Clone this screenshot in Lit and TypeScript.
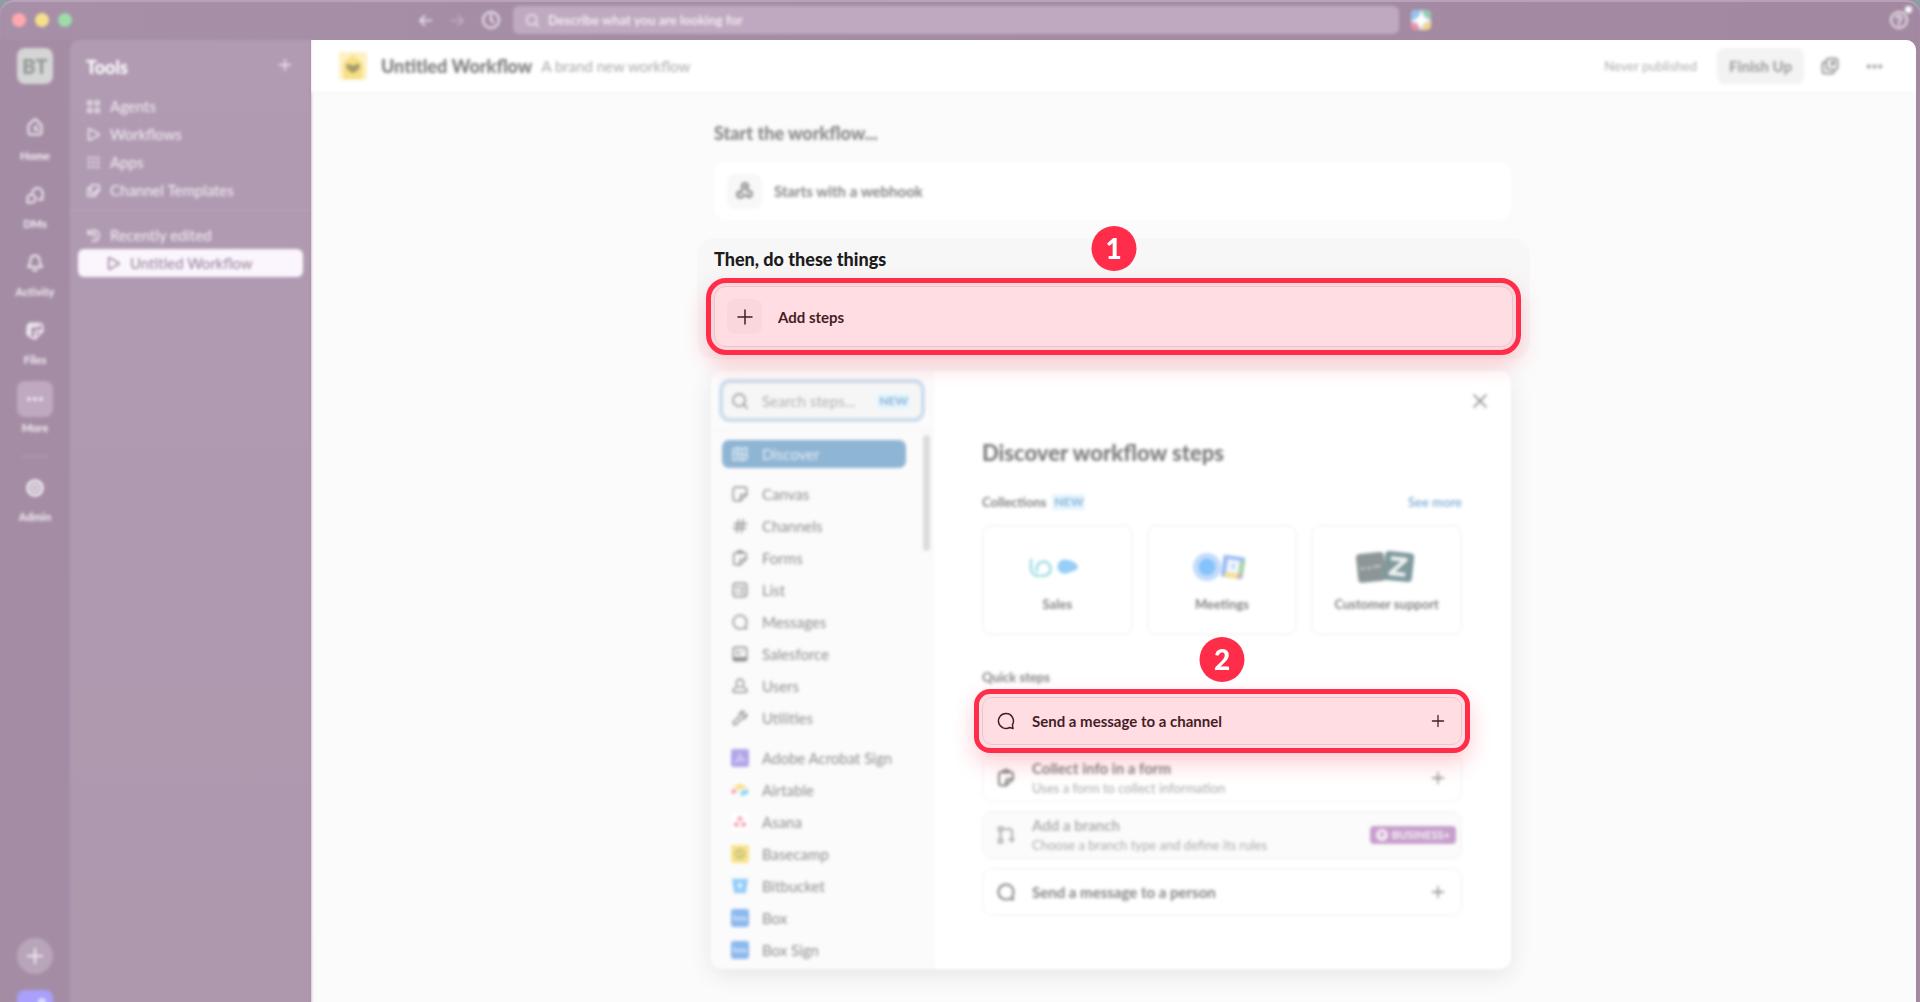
import { LitElement, html, svg, css, nothing } from "lit";
import { customElement, property } from "lit/decorators.js";

/* Line icons on a 20 x 20 grid, stroked with the current colour. */
const ICONS: Record<string, unknown> = {
  back: svg`<path d="M17 10H4M9 4.5 3.5 10 9 15.5"/>`,
  forward: svg`<path d="M3 10h13M11 4.5 16.5 10 11 15.5"/>`,
  clock: svg`<circle cx="10" cy="10" r="8"/><path d="M10 5v5l2.6 2.4"/>`,
  search: svg`<circle cx="9" cy="9" r="6.8"/><path d="m14 14 4 4"/>`,
  help: svg`<circle cx="10" cy="10" r="8"/><path d="M7.6 8a2.4 2.4 0 1 1 3.4 2.3c-.7.3-1 .7-1 1.5"/><circle cx="10" cy="14" r=".5"/>`,
  home: svg`<path d="M3.5 8.2 8.6 3a2 2 0 0 1 2.8 0l5.1 5.2V15a2.5 2.5 0 0 1-2.5 2.5H6A2.5 2.5 0 0 1 3.5 15z"/><path d="M13 13h-1.500a1.500 1.500 0 0 1 0-3.500H12"/>`,
  dms: svg`<path d="M7.2 7.5A5.400 5.400 0 1 1 17.300 11l.2 3.500h-4"/><path d="M2.500 17.500v-4a4 4 0 1 1 4 4z"/>`,
  bell: svg`<path d="M10 2.500c-3 0-4.300 2.200-4.600 4.500L4.800 11 3 14h14l-1.800-3-.6-4C14.300 4.700 13 2.500 10 2.500z"/><path d="M8 17.200h4"/>`,
  files: svg`<path d="M17.500 10V6A3.500 3.500 0 0 0 14 2.500H6A3.500 3.500 0 0 0 2.500 6v8"/><path d="M2.500 10a7.500 7.500 0 0 0 7.500 7.500l7.500-7.500"/><path d="M10 17.500V12a2 2 0 0 1 2-2h5.500"/><path d="M5 5h8" stroke-width="3"/><path d="M5 5v8" stroke-width="3"/>`,
  dots: svg`<g fill="currentColor" stroke="none"><circle cx="4" cy="10" r="2"/><circle cx="10" cy="10" r="2"/><circle cx="16" cy="10" r="2"/></g>`,
  gear: svg`<circle cx="10" cy="10" r="7.5" stroke-width="2.6" stroke-dasharray="4 1.9"/><circle cx="10" cy="10" r="6.5"/><circle cx="10" cy="10" r="3" stroke-width="2.4"/>`,
  plus: svg`<path d="M10 3v14M3 10h14"/>`,
  close: svg`<path d="m4 4 12 12M16 4 4 16"/>`,
  agents: svg`<rect x="2.5" y="2.5" width="5" height="5" rx="1"/><rect x="12.5" y="2.5" width="5" height="5" rx="1"/><rect x="2.5" y="12.5" width="5" height="5" rx="1"/><rect x="12.5" y="12.5" width="5" height="5" rx="1"/>`,
  play: svg`<path d="M3.500 3.500v13a1 1 0 0 0 1.500.9l12-6.500a1 1 0 0 0 0-1.800L5 2.600a1 1 0 0 0-1.500.9z"/>`,
  apps: svg`<g fill="currentColor" stroke="none">${[4, 10, 16].map((y) => [4, 10, 16].map((x) => svg`<circle cx=${x} cy=${y} r="1.7"/>`))}</g>`,
  templates: svg`<path d="M6 6H4.500a2 2 0 0 0-2 2v7.500a2 2 0 0 0 2 2H11a2 2 0 0 0 2-2"/><path d="M8.500 2.500h7a2 2 0 0 1 2 2v5.500l-3.500 3.500H8.500a2 2 0 0 1-2-2v-7a2 2 0 0 1 2-2z"/><path d="M17.500 9.500H15a1.500 1.500 0 0 0-1.500 1.500v2.500"/>`,
  history: svg`<path d="M3 3v5h5"/><path d="M3.500 8A7.200 7.200 0 1 1 8 17"/><path d="M10.500 6v4.500L13 12"/>`,
  popout: svg`<path d="M6 6H5a2.500 2.500 0 0 0-2.500 2.500V15A2.500 2.500 0 0 0 5 17.500h6.500A2.500 2.500 0 0 0 14 15"/><rect x="6.5" y="2.5" width="11" height="11" rx="2.5"/><path d="M11 9.500 14 6M11.500 6H14v2.500"/>`,
  webhook: svg`<path d="M12.800 6.200a3 3 0 1 0-4.700 1.300L5.700 12"/><path d="M4.700 10.600a3 3 0 1 0 3.400 3.600h5"/><path d="M10 5.200l2.600 5a3 3 0 1 1-.2 5.300"/>`,
  canvas: svg`<path d="M17.500 10.500V5A2.500 2.500 0 0 0 15 2.500H5A2.500 2.500 0 0 0 2.500 5v10A2.500 2.500 0 0 0 5 17.500h5.500z"/><path d="M10.500 17.500V13a2.500 2.500 0 0 1 2.500-2.500h4.500"/>`,
  hash: svg`<path d="M8.500 3 6.500 17M13.500 3l-2 14M3.500 7.500h14M2.500 12.500h14"/>`,
  form: svg`<path d="M17 8V6.500a2.500 2.500 0 0 0-2.500-2.500h-9A2.500 2.500 0 0 0 3 6.500V15a2.500 2.500 0 0 0 2.500 2.500H10l7-6.500z"/><path d="M7 4.500V3.200C7 2.500 8 2.500 8.500 2.500 9 1.500 11 1.500 11.500 2.500c.5 0 1.500 0 1.500.7v1.300z"/><path d="M10 17.500V13.500a2.500 2.500 0 0 1 2.500-2.500H17"/>`,
  list: svg`<rect x="2.5" y="2.5" width="15" height="15" rx="3"/><path d="m5.500 7 1 1 1.700-2M10.500 7H15M10.500 10.500H15M10.500 14H15M5.500 12.800h2.500"/>`,
  message: svg`<path d="M10 2.500a7.500 7.500 0 1 0 3.700 14l3.300 1-.6-3.700A7.500 7.500 0 0 0 10 2.500z"/>`,
  record: svg`<rect x="2.5" y="2.5" width="15" height="15" rx="2.5"/><path d="M6 6.500h2.500M6 9.500h4M12.500 6.500H14"/><path d="M3 14h14v3H3z" fill="currentColor"/>`,
  user: svg`<path d="M10 2.500a4 4 0 0 0-4 4.200C6 9.500 8 11.500 10 11.500s4-2 4-4.800a4 4 0 0 0-4-4.200z"/><path d="M6.800 11 3.500 12.800A2 2 0 0 0 2.500 15v1a1 1 0 0 0 1 1h13a1 1 0 0 0 1-1v-1a2 2 0 0 0-1-2.200L13.200 11"/>`,
  wrench: svg`<path d="M14.500 2.500a4.500 4.500 0 0 0-5.300 5.800L3 14a2 2 0 0 0 3 3l6-6.200a4.500 4.500 0 0 0 5.500-5.300L14.500 8 12.500 7.500 12 5.500z"/>`,
  map: svg`<path d="M2.500 4.500 7.500 3l5 1.500L17.500 3v12.500l-5 1.500-5-1.500-5 1.500zM7.500 3v12.500M12.500 4.500V17M3 10c4-3 8 3 14 0"/>`,
  branch: svg`<circle cx="4.5" cy="4" r="2"/><circle cx="4.5" cy="16" r="2"/><path d="M4.500 6v8M7 4h6.500A2.500 2.500 0 0 1 16 6.500V12M13.500 14.500H18M15.800 12.200v4.600"/>`,
};

/* Full-colour app marks on the same grid. */
const MARKS: Record<string, unknown> = {
  acrobat: svg`<rect width="20" height="20" rx="3" fill="#b3a6e8"/><path d="M4.500 14.500c2.500-1 5-5.500 5-9 1 4 3 6.500 6 7-4-.5-8 .2-11 2z" fill="none" stroke="#dcd6f6" stroke-width="1.4"/>`,
  airtable: svg`<path d="M2 6.500 10 3l8 3.500-8 3.500z" fill="#fbdf84"/><path d="M1 8.500 8 11l-7 4z" fill="#f998ab"/><path d="M11 11.500 19 8.500V14l-8 3.200z" fill="#8dd3f9"/>`,
  asana: svg`<rect width="20" height="20" rx="3" fill="#fff"/><g fill="#f8a9b5"><circle cx="10" cy="6.5" r="2.8"/><circle cx="6" cy="12.8" r="2.8"/><circle cx="14" cy="12.8" r="2.8"/></g>`,
  basecamp: svg`<rect width="20" height="20" rx="3" fill="#f9e38c"/><circle cx="10" cy="10" r="6.5" fill="#d3ca80"/><path d="M5.500 10.500c1.500 1.500 2.500 0 4-1.500 1 1.500 2.500 1 4-1" fill="none" stroke="#f3df8a" stroke-width="1.6"/>`,
  bitbucket: svg`<path d="M1 2h18l-2.600 16H3.600z" fill="#94cdfb"/><path d="M7.500 7h5l-1 5.500h-3z" fill="#e9f5ff"/>`,
  box: svg`<rect width="20" height="20" rx="3" fill="#8bb8ee"/><g fill="none" stroke="#d5e6fb" stroke-width="1.3"><path d="M3.500 7v4.500"/><circle cx="5.5" cy="10.8" r="1.7"/><circle cx="10.5" cy="10.8" r="1.7"/><path d="m13.500 9 3.200 3.600M16.700 9l-3.200 3.600"/></g>`,
};

@customElement("ui-icon")
export class UiIcon extends LitElement {
  @property() name = "";
  @property({ type: Number }) size = 18;
  @property({ type: Number }) weight = 1.6;

  static styles = css`
    :host { display: inline-flex; flex: none; }
    svg { display: block; }
  `;

  render() {
    const mark = MARKS[this.name];
    return html`<svg width=${this.size} height=${this.size} viewBox="0 0 20 20" aria-hidden="true"
      fill="none" stroke=${mark ? "none" : "currentColor"} stroke-width=${this.weight}
      stroke-linecap="round" stroke-linejoin="round">${mark ?? ICONS[this.name] ?? nothing}</svg>`;
  }
}

const RAIL = [
  ["home", "Home"], ["dms", "DMs"], ["bell", "Activity"], ["files", "Files"], ["dots", "More"],
];
const TOOLS = [
  ["agents", "Agents"], ["play", "Workflows"], ["apps", "Apps"], ["templates", "Channel Templates"],
];
const STEP_GROUPS = [
  ["canvas", "Canvas"], ["hash", "Channels"], ["form", "Forms"], ["list", "List"],
  ["message", "Messages"], ["record", "Salesforce"], ["user", "Users"], ["wrench", "Utilities"],
];
const APP_GROUPS = [
  ["acrobat", "Adobe Acrobat Sign"], ["airtable", "Airtable"], ["asana", "Asana"],
  ["basecamp", "Basecamp"], ["bitbucket", "Bitbucket"], ["box", "Box"], ["box", "Box Sign"],
];
const COLLECTIONS = [
  {
    name: "Sales",
    art: svg`<path d="M9 10v8c0 5 3 8 8 8M15 21a7 7 0 1 1 5 4.500" fill="none" stroke="#a6dfe6" stroke-width="2.8" stroke-linecap="round"/><path d="M37 12c3-3 6-3 9-2 3 0 5 2 7 3 3 1 4 5 1 7-3 1-5 2-8 3-3 1-6 1-8-1-3-2-3-7-1-10z" fill="#97cef8"/>`,
  },
  {
    name: "Meetings",
    art: svg`<circle cx="20" cy="17" r="14" fill="#c3dcfb"/><circle cx="20" cy="17" r="8.5" fill="#86c3fb"/><g transform="rotate(8 46 17)"><rect x="35" y="6" width="22" height="22" rx="2" fill="#9dbff3"/><path d="M52 10h5v13h-5z" fill="#a9d4a4"/><path d="M39 23h13v5H39z" fill="#fbe08b"/><path d="M52 23h5l-5 5z" fill="#f5a59d"/><rect x="40" y="10" width="12" height="13" fill="#f4f8fe"/><path d="M44 13h4v6h-4z" fill="#c9dcf8"/></g>`,
  },
  {
    name: "Customer support",
    art: svg`<g transform="rotate(-6 18 17)"><rect x="5" y="3" width="28" height="29" rx="4" fill="#8d9697"/><path d="M8 18h5M15 18h4M21 17h8" stroke="#b9c0c0" stroke-width="2.6"/></g><g transform="rotate(6 46 17)"><rect x="32" y="2" width="29" height="29" rx="4" fill="#7f999d"/><path d="M38 9h15L39 24h15" fill="none" stroke="#f0f4f4" stroke-width="4" stroke-linejoin="round"/></g>`,
  },
];

@customElement("app-root")
export class AppRoot extends LitElement {
  static styles = css`
    :host {
      display: block;
      height: 100vh;
      overflow: hidden;
      background: #8d9da6;
      font: 400 15px/20px Lato, "Open Sans", sans-serif;
      color: #1d1c1d;
    }
    * { box-sizing: border-box; }
    button, input { font: inherit; color: inherit; border: 0; background: none; padding: 0; margin: 0; }
    button { cursor: pointer; text-align: left; }
    a { color: inherit; text-decoration: none; }
    h1, h2, h3, p { margin: 0; font-size: inherit; font-weight: inherit; }
    input { outline: 0; min-width: 0; flex: 1; }

    /* De-emphasises everything but the guided steps. */
    .soft { filter: blur(1px) blur(1px); }

    /* Window frame; it runs past the lower edge of the viewport. */
    .window {
      display: grid;
      grid-template: 40px 1fr / 70px 241px 1fr;
      height: calc(100vh + 32px);
      border-radius: 14px;
      background: linear-gradient(90deg, #a78fa8, #a288a0);
      box-shadow: inset 0 2px 1px #b8a3ba;
      overflow: hidden;
    }

    .topbar {
      grid-column: 1 / -1;
      display: grid;
      grid-template-columns: 513px 1fr 521px;
      align-items: center;
      color: #efe8f0;
    }
    .top-left { display: flex; align-items: center; justify-content: space-between; padding: 0 12px; }
    .lights { display: flex; gap: 9px; }
    .light { width: 14px; height: 14px; border-radius: 50%; }
    .red { background: #ffa9ae; }
    .yellow { background: #f7e08c; }
    .green { background: #9ddcaa; }
    .nav { display: flex; align-items: center; gap: 15px; }
    .nav button { display: flex; }
    .dim { opacity: 0.4; }
    .top-search {
      display: flex; align-items: center; gap: 8px;
      height: 28px; padding: 0 12px; border-radius: 6px;
      background: #bfa9c0; font-size: 13px; font-weight: 700;
    }
    .top-search input::placeholder { color: #f3edf4; opacity: 1; }
    .top-right { display: flex; align-items: center; justify-content: space-between; padding: 0 11px 0 12px; }
    .help { position: relative; display: flex; }
    .help::after {
      content: ""; position: absolute; top: -4px; right: -3px;
      width: 7px; height: 7px; border-radius: 50%; background: #fff;
    }

    .rail {
      display: flex; flex-direction: column; align-items: center;
      padding: 8px 0 8px; color: #f0eaf1; background: #a48ca5;
    }
    .team {
      width: 36px; height: 36px; border-radius: 8px; background: #d5d5d5; color: #8f9595;
      font-size: 20px; font-weight: 900; line-height: 36px; text-align: center;
    }
    .rail-nav { display: flex; flex-direction: column; gap: 12px; margin-top: 25px; }
    .rail-item {
      display: flex; flex-direction: column; align-items: center; gap: 1px;
      font-size: 11px; line-height: 19px; font-weight: 900; width: 64px;
    }
    .rail-box { display: grid; place-items: center; width: 36px; height: 36px; border-radius: 8px; }
    .on { background: #bea9c0; }
    .rail-line { width: 26px; height: 1px; background: #b6a3b8; margin: 19px 0 13px; }
    .rail-add {
      display: grid; place-items: center; width: 36px; height: 36px; border-radius: 50%;
      background: #b9a5ba; margin-top: auto; margin-bottom: 16px;
    }
    .me { width: 36px; height: 36px; border-radius: 8px; background: #a9a0fb; overflow: hidden; }

    .side {
      border-top-left-radius: 10px;
      background: linear-gradient(180deg, #b19bb3, #ae98ae);
      color: #f4eff5; padding: 13px 0;
    }
    .side-head { display: flex; align-items: center; justify-content: space-between; padding: 0 18px 0 16px; }
    .side-head h2 { font-size: 18px; line-height: 28px; font-weight: 900; color: #fff; }
    .side-list { display: flex; flex-direction: column; padding: 0 8px; }
    .tools { padding-top: 11px; }
    .side-item {
      display: flex; align-items: center; gap: 9px; height: 28px;
      padding: 0 8px; border-radius: 6px;
    }
    .recent { margin-top: 6px; padding-top: 10px; border-top: 1px solid #baa7bc; }
    .current { background: #fbf6fd; color: #947b96; padding-left: 28px; }

    .main {
      display: flex; flex-direction: column;
      margin-right: 4px; border-top-right-radius: 10px; background: #fbfbfb; overflow: hidden;
    }
    .head {
      display: flex; align-items: center; gap: 14px; height: 53px; padding: 0 32px 0 28px;
      background: #fff; border-bottom: 1px solid #f1f1f1; color: #a8a8a8;
    }
    .emoji { display: flex; }
    .title { font-size: 18px; font-weight: 900; color: #7c7c7c; margin-right: -5px; }
    .spacer { flex: 1; }
    .status { font-size: 13px; margin-right: 6px; color: #adadad; }
    .finish {
      height: 36px; padding: 0 12px; border-radius: 8px; background: #f3f3f3;
      color: #a0a0a0; font-weight: 900; margin-right: 2px;
    }
    .head-icon { display: flex; color: #999; margin-right: 11px; }
    .last { margin-right: 0; }

    .canvas { width: 833px; max-width: 100%; margin: 0 auto; padding-top: 28px; }
    .section-title { font-size: 18px; line-height: 24px; font-weight: 900; }
    .start { padding: 0 19px 0 17px; color: #858585; }
    .trigger, .add {
      display: flex; align-items: center; width: 100%;
      border-radius: 12px; background: #fff; font-weight: 700;
    }
    .trigger { gap: 12px; height: 58px; margin-top: 17px; padding: 0 13px; }
    .tile { display: grid; place-items: center; width: 35px; height: 35px; border-radius: 8px; background: #f8f8f8; }

    .steps { margin-top: 18px; padding: 9px 17px 12px; border-radius: 18px; background: #f7f7f7; }
    .target { position: relative; z-index: 2; }
    .add-wrap { margin-top: 15px; }
    .add { gap: 16px; height: 61px; padding: 0 12px; border: 1px solid #e4e4e4; }
    .ring {
      position: absolute; inset: -8px; border: 5px solid #ff2d49; border-radius: 20px;
      background: rgba(255, 45, 73, 0.16);
      box-shadow: 0 10px 22px rgba(255, 45, 73, 0.24);
      pointer-events: none;
    }
    .badge {
      position: absolute; left: 50%; top: -60px; transform: translateX(-50%);
      width: 45px; height: 45px; border-radius: 50%; background: #ff2d49; color: #fff;
      font-size: 28px; line-height: 45px; font-weight: 900; text-align: center;
    }

    /* Step picker */
    .picker-area { position: relative; padding: 12px 19px 0 14px; }
    .picker { position: relative; display: grid; grid-template-columns: 222px 1fr; }
    .sheet {
      position: absolute; inset: 0; border-radius: 12px;
      background: linear-gradient(90deg, #fbfbfb 221px, #f4f4f4 221px, #f4f4f4 222px, #fff 222px);
      box-shadow: 0 6px 24px rgba(0, 0, 0, 0.09);
    }
    .groups { position: relative; padding-top: 8px; color: #8e8e8e; }
    .find {
      display: flex; align-items: center; gap: 13px; height: 43px; margin: 0 8px;
      padding: 0 11px 0 8px; border: 4px solid #cbdcec; border-radius: 11px; background: #f6f6f6;
    }
    .find input::placeholder { color: #b0b0b0; opacity: 1; }
    .find input { width: 60px; }
    .new {
      border-radius: 3px; background: #e6f5fd; color: #8fb8da;
      font-size: 12px; line-height: 16px; font-weight: 900; padding: 0 2px;
    }
    .group-list {
      display: flex; flex-direction: column; margin-top: 8px; padding: 9px 27px 0 11px;
      border-top: 1px solid #f3f3f3;
    }
    .group-item { display: flex; align-items: center; gap: 13px; height: 32px; padding: 0 9px; }
    .chosen { height: 28px; margin-bottom: 10px; border-radius: 7px; background: #8fb5d4; color: #e4eef6; }
    .apps-start { margin-top: 8px; }
    .thumb { position: absolute; right: 3px; top: 64px; width: 7px; height: 116px; border-radius: 4px; background: #dcdcdc; }

    .detail { position: relative; padding: 68px 49px 53px; min-width: 0; color: #848484; }
    .close { position: absolute; top: 20px; right: 21px; display: flex; }
    .detail-title { font-size: 22px; line-height: 28px; font-weight: 900; color: #7c7c7c; }
    .sub { display: flex; align-items: center; gap: 6px; margin-top: 25px; font-size: 13px; font-weight: 700; }
    .more { margin-left: auto; color: #8db5d9; }
    .cards { display: grid; grid-template-columns: repeat(3, 1fr); gap: 14px; margin-top: 13px; }
    .card {
      display: flex; flex-direction: column; align-items: center; gap: 10px; height: 110px; padding-top: 24px;
      border: 1px solid #ededed; border-radius: 10px; background: #fff;
      font-size: 13px; font-weight: 700;
    }
    .quick-title { margin-top: 32px; font-size: 13px; font-weight: 700; }
    .quick { display: flex; flex-direction: column; gap: 9px; margin-top: 10px; }
    .row {
      display: flex; align-items: center; gap: 16px; width: 100%; height: 48px; padding: 0 15px 0 13px;
      border: 1px solid #f1f1f1; border-radius: 10px; background: #fff; font-weight: 700;
    }
    .row-text { display: flex; flex-direction: column; flex: 1; }
    .note { font-size: 13px; font-weight: 400; color: #aaa; }
    .off { background: #fbfbfb; color: #aeaeae; padding-right: 5px; }
    .live { border-color: #e4e4e4; color: #1d1c1d; }
    .live-ring { border-radius: 16px; }
    .plan {
      display: flex; align-items: center; gap: 4px; height: 18px; padding: 0 6px; border-radius: 4px;
      background: #c79fcc; color: #f5ecf6; font-size: 11px; font-weight: 900;
    }
  `;

  private rail() {
    return html`<nav class="rail soft" aria-label="Workspace">
      <button class="team">BT</button>
      <div class="rail-nav">
        ${RAIL.map(([icon, label]) => html`<button class="rail-item">
          <span class="rail-box ${label === "More" ? "on" : ""}"><ui-icon name=${icon} .size=${20} .weight=${2}></ui-icon></span>${label}
        </button>`)}
      </div>
      <div class="rail-line"></div>
      <button class="rail-item"><span class="rail-box"><ui-icon name="gear" .size=${20}></ui-icon></span>Admin</button>
      <button class="rail-add" aria-label="Create"><ui-icon name="plus" .size=${20} .weight=${2}></ui-icon></button>
      <button class="me" aria-label="Profile">
        <svg width="36" height="36" viewBox="0 0 36 36" aria-hidden="true"><circle cx="25" cy="12" r="4" fill="#d5dcfb"/><path d="M17 36c0-12 3-18 8-18s8 6 8 18z" fill="#d5dcfb"/></svg>
      </button>
    </nav>`;
  }

  private sidebar() {
    return html`<aside class="side soft">
      <div class="side-head"><h2>Tools</h2><button aria-label="Add tool"><ui-icon name="plus" .size=${16}></ui-icon></button></div>
      <nav class="side-list tools" aria-label="Tools">
        ${TOOLS.map(([icon, label]) => html`<a class="side-item" href="#"><ui-icon name=${icon} .size=${15} .weight=${2}></ui-icon>${label}</a>`)}
      </nav>
      <div class="recent">
        <div class="side-list">
          <a class="side-item" href="#"><ui-icon name="history" .size=${15} .weight=${2}></ui-icon>Recently edited</a>
          <a class="side-item current" href="#"><ui-icon name="play" .size=${15} .weight=${2}></ui-icon>Untitled Workflow</a>
        </div>
      </div>
    </aside>`;
  }

  private group([icon, label]: string[], index: number, cls = "") {
    return html`<button class="group-item ${index === 0 ? cls : ""}"><ui-icon name=${icon}></ui-icon>${label}</button>`;
  }

  private picker() {
    return html`<div class="picker-area"><section class="picker" aria-label="Step picker">
      <div class="sheet soft"></div>
      <div class="groups soft">
        <label class="find"><ui-icon name="search"></ui-icon><input type="text" aria-label="Search steps" placeholder="Search steps..." /><span class="new">NEW</span></label>
        <div class="group-list">
          <button class="group-item chosen"><ui-icon name="map"></ui-icon>Discover</button>
          ${STEP_GROUPS.map((g, i) => this.group(g, i))}
          ${APP_GROUPS.map((g, i) => this.group(g, i, "apps-start"))}
        </div>
        <div class="thumb"></div>
      </div>
      <div class="detail">
        <button class="close soft" aria-label="Close"><ui-icon name="close" .size=${20}></ui-icon></button>
        <h2 class="detail-title soft">Discover workflow steps</h2>
        <div class="sub soft"><h3>Collections</h3><span class="new">NEW</span><a class="more" href="#">See more</a></div>
        <div class="cards soft">
          ${COLLECTIONS.map((c) => html`<button class="card"><svg width="70" height="34" viewBox="0 0 70 34" aria-hidden="true">${c.art}</svg>${c.name}</button>`)}
        </div>
        <h3 class="quick-title soft">Quick steps</h3>
        <div class="quick">
          <div class="target">
            <button class="row live"><ui-icon name="message" .size=${20} .weight=${1.5}></ui-icon><span class="row-text">Send a message to a channel</span><ui-icon name="plus" .size=${16}></ui-icon></button>
            <div class="ring live-ring"></div><span class="badge">2</span>
          </div>
          <button class="row soft"><ui-icon name="form" .size=${20} .weight=${2}></ui-icon><span class="row-text">Collect info in a form<span class="note">Uses a form to collect information</span></span><ui-icon name="plus" .size=${16}></ui-icon></button>
          <button class="row off soft"><ui-icon name="branch" .size=${20} .weight=${2}></ui-icon><span class="row-text">Add a branch<span class="note">Choose a branch type and define its rules</span></span>
            <span class="plan"><svg width="12" height="12" viewBox="0 0 12 12" aria-hidden="true"><circle cx="6" cy="6" r="6" fill="#f5ecf6"/><path d="M6 9V3.500M3.500 6 6 3.500 8.500 6" fill="none" stroke="#c79fcc" stroke-width="1.4"/></svg>BUSINESS+</span></button>
          <button class="row soft"><ui-icon name="message" .size=${20} .weight=${2}></ui-icon><span class="row-text">Send a message to a person</span><ui-icon name="plus" .size=${16}></ui-icon></button>
        </div>
      </div>
    </section></div>`;
  }

  render() {
    return html`<div class="window">
      <header class="topbar soft">
        <div class="top-left">
          <div class="lights"><span class="light red"></span><span class="light yellow"></span><span class="light green"></span></div>
          <div class="nav">
            <button aria-label="Back"><ui-icon name="back" .size=${17} .weight=${2}></ui-icon></button>
            <button class="dim" aria-label="Forward"><ui-icon name="forward" .size=${17} .weight=${2}></ui-icon></button>
            <button aria-label="History"><ui-icon name="clock" .size=${20} .weight=${2}></ui-icon></button>
          </div>
        </div>
        <label class="top-search"><ui-icon name="search" .size=${15} .weight=${2}></ui-icon><input type="search" aria-label="Search" placeholder="Describe what you are looking for" /></label>
        <div class="top-right">
          <svg width="20" height="20" viewBox="0 0 20 20" aria-hidden="true"><rect width="20" height="20" rx="5" fill="#dfe6ee"/><path d="M5 0h5L7 7l-7 4V5a5 5 0 0 1 5-5z" fill="#93c4ee"/><path d="M11 0h4a5 5 0 0 1 5 5v5l-6-4z" fill="#8fcbae"/><path d="M0 12l6 2 3 6H5a5 5 0 0 1-5-5z" fill="#f28da2"/><path d="M20 12v3a5 5 0 0 1-5 5h-4l2-6z" fill="#f2d486"/><path d="M10 3l3 5 4 2-4 3-3 4-3-4-4-3 4-2z" fill="#fff"/></svg>
          <button class="help" aria-label="Help"><ui-icon name="help" .size=${20} .weight=${2}></ui-icon></button>
        </div>
      </header>
      ${this.rail()} ${this.sidebar()}
      <main class="main">
        <header class="head soft">
          <svg class="emoji" width="28" height="28" viewBox="0 0 28 28" aria-hidden="true"><rect width="28" height="28" rx="3" fill="#fdf1c4"/><path d="M14 5c6 0 10 5 10 11 0 4-1 8-1 11H5c0-3-1-7-1-11C4 10 8 5 14 5z" fill="#f7df84"/><path d="M7 13c2-2 5-1 7 1 2-2 5-3 7-1 0 4-4 7-7 8-3-1-7-4-7-8z" fill="#a89c6c"/><path d="M14 2v4" stroke="#f7e08a" stroke-width="2"/></svg>
          <h1 class="title">Untitled Workflow</h1><span>A brand new workflow</span>
          <span class="spacer"></span>
          <span class="status">Never published</span>
          <button class="finish">Finish Up</button>
          <button class="head-icon" aria-label="Open in window"><ui-icon name="popout" .size=${20} .weight=${2}></ui-icon></button>
          <button class="head-icon last" aria-label="More actions"><ui-icon name="dots" .size=${19}></ui-icon></button>
        </header>
        <div class="canvas">
          <section class="start soft">
            <h2 class="section-title">Start the workflow...</h2>
            <button class="trigger"><span class="tile"><ui-icon name="webhook" .size=${20} .weight=${2}></ui-icon></span>Starts with a webhook</button>
          </section>
          <section class="steps">
            <h2 class="section-title">Then, do these things</h2>
            <div class="target add-wrap">
              <button class="add"><span class="tile"><ui-icon name="plus" .size=${20} .weight=${1.5}></ui-icon></span>Add steps</button>
              <div class="ring"></div><span class="badge">1</span>
            </div>
          </section>
          ${this.picker()}
        </div>
      </main>
    </div>`;
  }
}
